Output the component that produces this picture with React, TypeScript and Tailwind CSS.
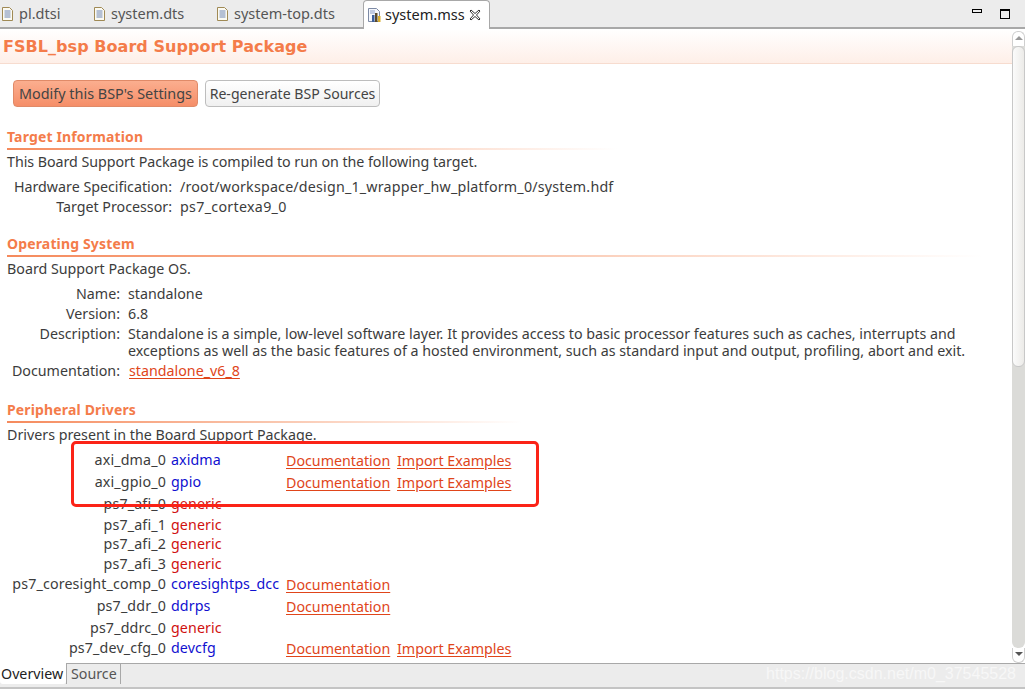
const font = { fontFamily: '"Noto Sans", sans-serif' };

function FileIcon() {
  return (
    <svg width="13" height="16" viewBox="0 0 13 16" className="shrink-0">
      <path d="M1.5 1.5h7l3 3v10h-10z" fill="#fbfaf2" stroke="#a08a55" />
      <path d="M3.5 5h6M3.5 7h6M3.5 9h6M3.5 11h6" stroke="#6f86b5" />
    </svg>
  );
}

function MssIcon() {
  return (
    <svg width="16" height="16" viewBox="0 0 16 16" className="shrink-0">
      <path d="M1.5 1.5h8l3 3v10h-11z" fill="#f4f6fb" stroke="#7d8aa5" />
      <path d="M3 4h5M3 6h5" stroke="#8ea0c8" />
      <rect x="5" y="8" width="2.5" height="7" fill="#3c5f9c" />
      <rect x="8" y="6" width="2.5" height="9" fill="#5a4a2c" />
      <rect x="11" y="9" width="2.5" height="6" fill="#d8ad2c" />
    </svg>
  );
}

function Tab({ label, width }: { label: string; width: string }) {
  return (
    <div className={`flex items-center gap-[5px] h-full ${width}`}>
      <FileIcon />
      <span className="text-[#555555]">{label}</span>
    </div>
  );
}

function Section({ title, lineWidth }: { title: string; lineWidth: string }) {
  return (
    <div className="px-[7px]">
      <div className="h-[20px] leading-[20px] font-bold text-[14px] text-[#f47c4a] tracking-[0.15px]">{title}</div>
      <div className={`h-[2px] mt-[1px] bg-gradient-to-r from-[#f58a5c] via-[#f9c4ab] to-white ${lineWidth}`} />
    </div>
  );
}

function Link({ children }: { children: string }) {
  return <span className="text-[#e0451a] underline underline-offset-2">{children}</span>;
}

function Info({ label, children, h = "h-[20px]", w }: { label: string; children: React.ReactNode; h?: string; w: string }) {
  return (
    <div className={`flex ${h} leading-[20px]`}>
      <div className={`${w} text-right text-[#3c3c3c] shrink-0`}>{label}</div>
      <div className="ml-[8px] text-[#3c3c3c]">{children}</div>
    </div>
  );
}

function Driver({ name, driver, color, doc, ex, h }: { name: string; driver: string; color: string; doc?: boolean; ex?: boolean; h: string }) {
  return (
    <div className={`flex items-center ${h}`}>
      <div className="w-[166px] text-right text-[#3c3c3c] shrink-0 tracking-[0.15px]">{name}</div>
      <div className={`ml-[5px] w-[115px] shrink-0 tracking-[0.1px] ${color}`}>{driver}</div>
      {doc && <div className="w-[111px] shrink-0 pt-[1px]"><Link>Documentation</Link></div>}
      {ex && <div className="pt-[1px]"><Link>Import Examples</Link></div>}
    </div>
  );
}

export default function App() {
  return (
    <div style={font} className="relative w-[1025px] h-[689px] overflow-hidden bg-white text-[14.25px] flex flex-col">
      <div className="h-[29px] shrink-0 bg-[#ececec] border-b-2 border-[#a8a8a8] flex items-center text-[14.5px] relative">
        <div className="flex h-[28px] items-center pl-[1px]">
          <Tab label="pl.dtsi" width="w-[92px]" />
          <Tab label="system.dts" width="w-[123px]" />
          <Tab label="system-top.dts" width="w-[147px]" />
          <div className="flex items-center gap-[2px] h-[29px] w-[127px] bg-white border border-b-0 border-[#a8a8a8] rounded-t-[4px] pl-[3px] -mb-[2px]">
            <MssIcon />
            <span className="text-[#222222]">system.mss</span>
            <svg width="12" height="12" viewBox="0 0 12 12" className="ml-[2px]">
              <path d="M2 1l4 3.5L10 1l1 1-3.5 4L11 10l-1 1-4-3.5L2 11l-1-1 3.5-4L1 2z" fill="white" stroke="#333" />
            </svg>
          </div>
        </div>
        <div className="ml-auto flex items-center mr-[15px] gap-[18px]">
          <div className="w-[10px] h-[4px] border border-black -mt-[5px]" />
          <div className="w-[10px] h-[10px] border border-black border-t-2" />
        </div>
      </div>

      <div className="flex flex-1 min-h-0">
        <div className="flex-1 min-w-0 overflow-hidden flex flex-col">
          <div className="h-[35px] shrink-0 bg-gradient-to-b from-white to-[#feefe8] border-b border-[#f7dccf] px-[3px] pt-[2px] flex items-center font-bold text-[#f47c4a] text-[16px] tracking-[0.05px]" style={{ fontFamily: '"DejaVu Sans", sans-serif' }}>
            FSBL_bsp Board Support Package
          </div>

          <div className="flex gap-[7px] pl-[13px] pt-[16px] pb-[20px]">
            <div className="h-[27px] w-[185px] rounded-[4px] border border-[#e08a68] bg-gradient-to-b from-[#fbae8f] to-[#f58e68] flex items-center justify-center text-[#444444] text-[14.4px]">Modify this BSP's Settings</div>
            <div className="h-[27px] w-[175px] rounded-[4px] border border-[#bdbdbd] bg-gradient-to-b from-white to-[#f0f0f0] flex items-center justify-center text-[#444444] text-[14.1px]">Re-generate BSP Sources</div>
          </div>

          <Section title="Target Information" lineWidth="w-[610px]" />
          <div className="px-[7px] h-[24px] leading-[24px] text-[#3c3c3c] tracking-[-0.04px]">This Board Support Package is compiled to run on the following target.</div>
          <div className="pt-[3px] pb-[17px]">
            <Info label="Hardware Specification:" w="w-[172px]"><span className="tracking-[0.2px]">/root/workspace/design_1_wrapper_hw_platform_0/system.hdf</span></Info>
            <Info label="Target Processor:" w="w-[172px]"><span className="tracking-[0.3px]">ps7_cortexa9_0</span></Info>
          </div>

          <Section title="Operating System" lineWidth="w-[975px]" />
          <div className="px-[7px] h-[24px] leading-[24px] text-[#3c3c3c]">Board Support Package OS.</div>
          <div className="pt-[3px] pb-[19px]">
            <Info label="Name:" w="w-[120px]">standalone</Info>
            <Info label="Version:" w="w-[120px]">6.8</Info>
            <Info label="Description:" h="h-[37px]" w="w-[120px]">
              <div className="leading-[17px] pt-[1px] w-[860px]">Standalone is a simple, low-level software layer. It provides access to basic processor features such as caches, interrupts and exceptions as well as the basic features of a hosted environment, such as standard input and output, profiling, abort and exit.</div>
            </Info>
            <Info label="Documentation:" w="w-[120px]"><span className="ml-[1px]"><Link>standalone_v6_8</Link></span></Info>
          </div>

          <Section title="Peripheral Drivers" lineWidth="w-[515px]" />
          <div className="px-[7px] h-[24px] leading-[24px] text-[#3c3c3c]">Drivers present in the Board Support Package.</div>
          <div className="pt-[2px]">
            <Driver name="axi_dma_0" driver="axidma" color="text-[#1010d0]" doc ex h="h-[22px]" />
            <Driver name="axi_gpio_0" driver="gpio" color="text-[#1010d0]" doc ex h="h-[22px]" />
            <Driver name="ps7_afi_0" driver="generic" color="text-[#d01010]" h="h-[22px]" />
            <Driver name="ps7_afi_1" driver="generic" color="text-[#d01010]" h="h-[19px]" />
            <Driver name="ps7_afi_2" driver="generic" color="text-[#d01010]" h="h-[20px]" />
            <Driver name="ps7_afi_3" driver="generic" color="text-[#d01010]" h="h-[19px]" />
            <Driver name="ps7_coresight_comp_0" driver="coresightps_dcc" color="text-[#1010d0]" doc h="h-[22px]" />
            <Driver name="ps7_ddr_0" driver="ddrps" color="text-[#1010d0]" doc h="h-[22px]" />
            <Driver name="ps7_ddrc_0" driver="generic" color="text-[#d01010]" h="h-[21px]" />
            <Driver name="ps7_dev_cfg_0" driver="devcfg" color="text-[#1010d0]" doc ex h="h-[20px]" />
          </div>
        </div>

        <div className="w-[13px] shrink-0 flex flex-col items-center bg-white pt-[2px]">
          <div className="w-[13px] h-[15px] rounded-t-[6px] border border-[#cfcfcf] border-b-0 flex justify-center pt-[4px]">
            <div className="w-0 h-0 border-x-[4px] border-x-transparent border-b-[4px] border-b-[#999999]" />
          </div>
          <div className="flex-1 w-[13px] bg-[#dbdbd8] rounded-b-[6px]">
            <div className="w-[13px] h-[321px] rounded-[6px] bg-gradient-to-r from-[#fbfbfb] to-[#ecebe8] border border-[#c8c8c8]" />
          </div>
          <div className="w-[13px] h-[15px] rounded-b-[6px] border border-[#cfcfcf] border-t-0 flex justify-center pt-[4px]">
            <div className="w-0 h-0 border-x-[4px] border-x-transparent border-t-[4px] border-t-[#555555]" />
          </div>
        </div>
      </div>

      <div className="h-[26px] shrink-0 bg-[#ececec] border-t border-[#a8a8a8] border-b-2 border-b-[#c4c4c4] flex relative">
        <div className="h-[21px] w-[66px] bg-white -mt-[1px] pl-[1px] leading-[21px] text-[#222222] rounded-b-[3px]">Overview</div>
        <div className="h-[21px] w-[55px] -mt-[1px] pl-[4px] leading-[21px] text-[#555555] border-x border-[#a8a8a8]">Source</div>
        <div className="ml-auto mr-[9px] -mt-[1px] leading-[21px] text-[16px] text-[#f7f7f7]" style={{ fontFamily: '"Liberation Sans", sans-serif' }}>https://blog.csdn.net/m0_37545528</div>
      </div>

      <div className="absolute left-[71px] top-[441px] w-[468px] h-[66px] border-[3px] border-[#fb2317] rounded-[5px]" />
    </div>
  );
}
